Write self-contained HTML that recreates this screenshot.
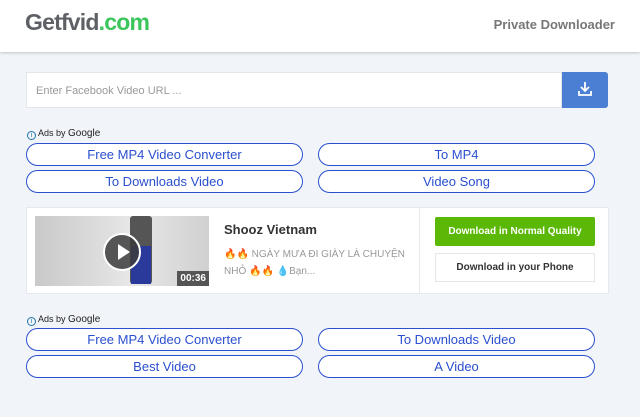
<!DOCTYPE html>
<html><head><style>
*{margin:0;padding:0;box-sizing:border-box}
body{width:640px;height:417px;background:#f1f4f9;font-family:"Liberation Sans",sans-serif;position:relative;overflow:hidden}
.hd{position:absolute;left:0;top:0;width:640px;height:52px;background:#fff;box-shadow:0 1px 3px rgba(0,0,0,.2)}
.logo{position:absolute;left:25px;top:9px;font-size:23px;font-weight:bold;letter-spacing:-0.8px;color:#5d6166}
.logo span{color:#3bc55a}
.pd{position:absolute;right:25px;top:17px;font-size:13px;color:#777;font-weight:bold}
.in{position:absolute;left:26px;top:72px;width:536px;height:36px;background:#fff;border:1px solid #e3e6ea;font-size:11px;color:#999;padding:12px 9px}
.btn{position:absolute;left:562px;top:72px;width:46px;height:36px;background:#4a7fd4;border-radius:0 3px 3px 0}
.ads{position:absolute;left:27px;font-size:9px;color:#222}
.ads i{display:inline-block;width:9px;height:9px;border:1px solid #27a;border-radius:50%;font-size:7px;color:#27a;text-align:center;line-height:7px;font-style:normal;vertical-align:-1px}
.p{position:absolute;height:23px;border:1.5px solid #2a4fcf;border-radius:12px;background:#fff;color:#2a4fcf;font-size:13px;text-align:center;line-height:22px}
.card{position:absolute;left:26px;top:207px;width:583px;height:87px;background:#fff;border:1px solid #e6e9ed}
.th{position:absolute;left:8px;top:8px;width:174px;height:70px;background:linear-gradient(90deg,#c9c9c9,#dedede 40%,#e8e8e8 55%,#d0d0d0)}
.g{position:absolute;left:408px;top:9px;width:160px;height:29px;background:#5cb806;color:#fff;font-size:10px;font-weight:bold;text-align:center;line-height:29px;border-radius:2px}
.ph{position:absolute;left:408px;top:45px;width:160px;height:29px;border:1px solid #e3e6ea;color:#333;font-size:10px;font-weight:bold;text-align:center;line-height:27px}
</style></head><body>
<div class="hd"><div class="logo">Getfvid<span>.com</span></div><div class="pd">Private Downloader</div></div>
<div class="in">Enter Facebook Video URL ...</div>
<div class="btn"><svg width="46" height="36"><path d="M23 10v9M19 15l4 4 4-4M17 19v4h12v-4" stroke="#fff" stroke-width="1.8" fill="none"/></svg></div>
<div class="ads" style="top:128px"><i>i</i> Ads by <b style="font-weight:normal;font-size:10px">Google</b></div>
<div class="p" style="left:26px;top:143px;width:277px">Free MP4 Video Converter</div>
<div class="p" style="left:318px;top:143px;width:277px">To MP4</div>
<div class="p" style="left:26px;top:170px;width:277px">To Downloads Video</div>
<div class="p" style="left:318px;top:170px;width:277px">Video Song</div>
<div class="card">
<div class="th">
<div style="position:absolute;left:95px;top:0;width:22px;height:68px;background:#555;border-radius:3px"></div>
<div style="position:absolute;left:96px;top:30px;width:20px;height:38px;background:#2a3a9a"></div>
<div style="position:absolute;left:68px;top:17px;width:38px;height:38px;border-radius:50%;background:rgba(60,60,60,.85);border:2px solid #fff"></div>
<div style="position:absolute;left:83px;top:28px;width:0;height:0;border-left:12px solid #fff;border-top:8px solid transparent;border-bottom:8px solid transparent"></div>
<div style="position:absolute;right:0;bottom:0;background:#555;color:#fff;font-size:10px;font-weight:bold;padding:2px 3px">00:36</div>
</div>
<div style="position:absolute;left:197px;top:14px;font-size:13px;color:#333;font-weight:bold">Shooz Vietnam</div>
<div style="position:absolute;left:197px;top:38px;width:185px;font-size:10px;color:#999;line-height:17px">🔥🔥 NGÀY MƯA ĐI GIÀY LÀ CHUYỆN NHỎ 🔥🔥 💧Bạn...</div>
<div style="position:absolute;left:392px;top:0;width:1px;height:85px;background:#e6e9ed"></div>
<div class="g">Download in Normal Quality</div>
<div class="ph">Download in your Phone</div>
</div>
<div class="ads" style="top:314px"><i>i</i> Ads by <b style="font-weight:normal;font-size:10px">Google</b></div>
<div class="p" style="left:26px;top:328px;width:277px">Free MP4 Video Converter</div>
<div class="p" style="left:318px;top:328px;width:277px">To Downloads Video</div>
<div class="p" style="left:26px;top:355px;width:277px">Best Video</div>
<div class="p" style="left:318px;top:355px;width:277px">A Video</div>
</body></html>
